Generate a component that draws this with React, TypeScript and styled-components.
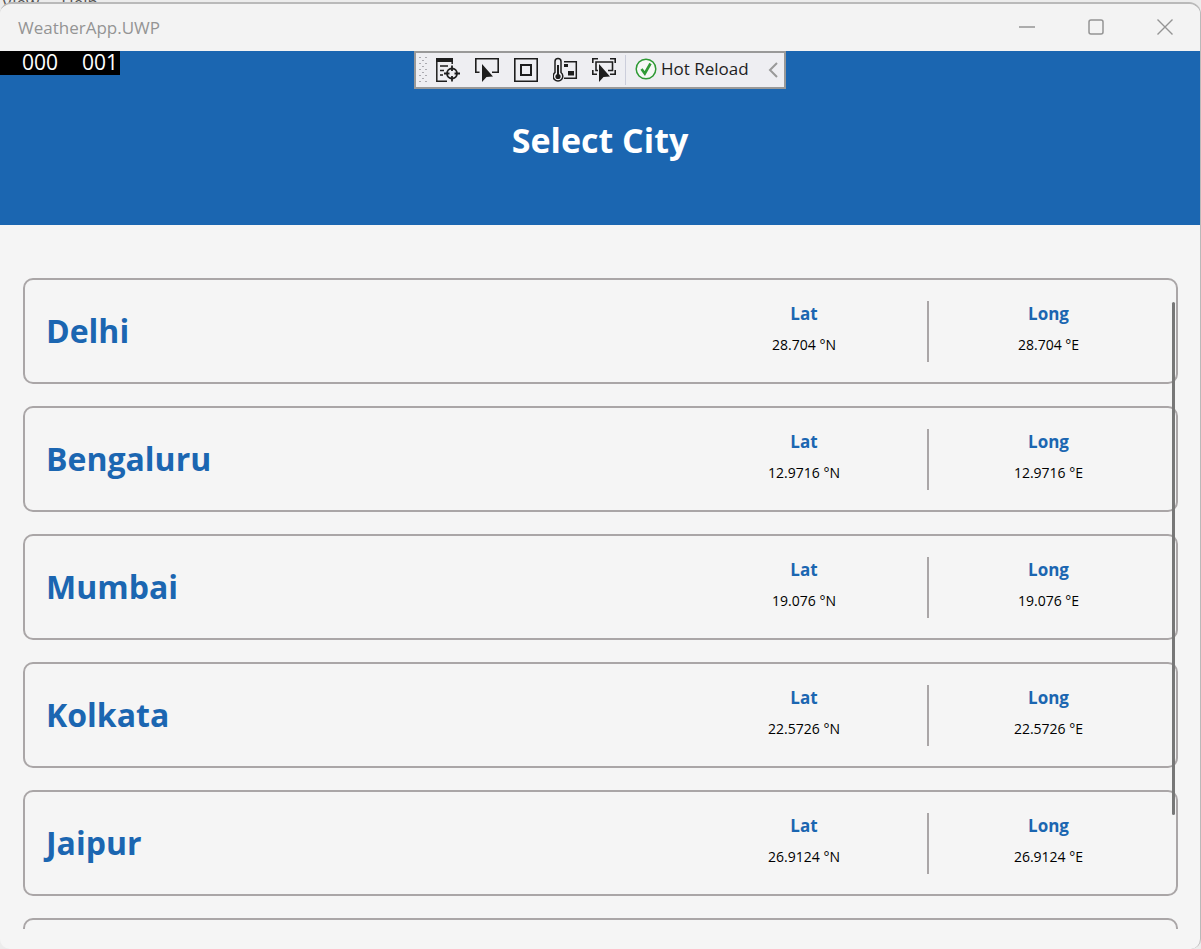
import React from "react";
import styled, { createGlobalStyle } from "styled-components";

const blue = "#1b66b1";
const outline = "#aaa6a7";

const GlobalStyle = createGlobalStyle`
  * { box-sizing: border-box; }
  body {
    margin: 0;
    background: #ececec;
    font-family: "Open Sans", "Noto Sans", sans-serif;
  }
  button {
    font: inherit;
    color: inherit;
    background: none;
    border: 0;
    padding: 0;
  }
`;

const Desktop = styled.div`
  position: relative;
  height: 100vh;
  padding-top: 2px;
  overflow: hidden;
`;

const BackgroundMenu = styled.div`
  position: absolute;
  top: -9px;
  left: 2px;
  display: flex;
  gap: 22px;
  color: #555;
  font-size: 17px;
  line-height: 24px;
`;

const Window = styled.div`
  position: relative;
  display: flex;
  flex-direction: column;
  height: 100%;
  overflow: hidden;
  background: #f5f5f5;
  border: solid #b9b9b9;
  border-width: 2px 1px 0 0;
  border-radius: 12px 12px 10px 10px;
`;

const TitleBar = styled.header`
  display: flex;
  flex: none;
  align-items: center;
  justify-content: space-between;
  height: 47px;
  padding: 0 1px 0 18px;
  background: #f3f3f3;
  color: #949494;
`;

const WindowTitle = styled.span`
  font-size: 17px;
  line-height: 24px;
`;

const WindowControls = styled.div`
  display: flex;
  align-self: flex-start;
`;

const WindowButton = styled.button`
  display: grid;
  place-items: center;
  width: 69px;
  height: 45px;
`;

const Banner = styled.div`
  position: relative;
  display: flex;
  flex: none;
  align-items: center;
  justify-content: center;
  height: 174px;
  padding-top: 4px;
  background: ${blue};
`;

const BannerTitle = styled.h1`
  margin: 0;
  color: #fff;
  font-size: 34px;
  font-weight: 700;
  line-height: 48px;
`;

const FrameCounter = styled.div`
  position: absolute;
  top: 0;
  left: 0;
  display: flex;
  gap: 24px;
  width: 120px;
  height: 24px;
  padding-left: 22px;
  background: #000;
  color: #fff;
  font-size: 21px;
  line-height: 23px;
`;

const DebugToolbar = styled.div`
  position: absolute;
  top: 0;
  left: 50%;
  display: flex;
  align-items: center;
  width: 372px;
  height: 38px;
  padding: 0 6px 0 3px;
  transform: translateX(-50%);
  background: #eeeef2;
  border: 2px solid #999;
  color: #1e1e1e;
`;

const ToolButtons = styled.div`
  display: flex;
  gap: 14px;
  margin-left: 8px;
`;

const ToolButton = styled.button`
  display: block;
  width: 25px;
  height: 26px;

  svg { display: block; }
`;

const ToolDivider = styled.span`
  width: 1px;
  height: 30px;
  margin: 0 9px 0 8px;
  background: #cccedb;
`;

const HotReload = styled.button`
  display: flex;
  align-items: center;
  gap: 4px;
  height: 36px;
  padding-bottom: 2px;
  font-size: 17px;
  line-height: 24px;
  white-space: nowrap;

  svg { flex: none; }
`;

const CollapseButton = styled.button`
  display: block;
  margin-left: auto;

  svg { display: block; }
`;

const ListArea = styled.main`
  position: relative;
  flex: 1;
  min-height: 0;
  margin: 53px 22px 20px 23px;
  overflow: hidden;
`;

const CityList = styled.ul`
  display: flex;
  flex-direction: column;
  gap: 22px;
  margin: 0;
  padding: 0;
  list-style: none;
`;

const CityCard = styled.li`
  display: grid;
  grid-template-columns: 1fr 246px 2px 239px;
  align-items: center;
  height: 106px;
  padding: 0 8px 0 21px;
  border: 2px solid ${outline};
  border-radius: 10px;
`;

const CityName = styled.h2`
  margin: 0;
  color: ${blue};
  font-size: 32px;
  font-weight: 700;
  line-height: 48px;
`;

const Coordinate = styled.div`
  display: flex;
  flex-direction: column;
  gap: 7px;
  align-items: center;
  padding-bottom: 4px;
`;

const CoordinateLabel = styled.span`
  color: ${blue};
  font-size: 17px;
  font-weight: 700;
  line-height: 24px;
`;

const CoordinateValue = styled.span`
  color: #000;
  font-size: 14px;
  line-height: 24px;
`;

const CardDivider = styled.span`
  height: 61px;
  background: ${outline};
`;

const ScrollTrack = styled.div`
  position: absolute;
  top: 24px;
  right: 3px;
  bottom: 24px;
  width: 3px;
`;

const ScrollThumb = styled.div`
  height: 85%;
  border-radius: 2px;
  background: #777;
`;

const pointer = "M7 7V25L11.5 20L18 19.5Z";

const InspectIcon = () => (
  <svg width="25" height="26" viewBox="0 0 25 26" fill="none" stroke="currentColor" strokeWidth="1.5">
    <path d="M.8 4V24.2H11M4 9H12M4 13.500H8M4 18H7M16.200 4V7" />
    <path d="M0 1H17V5H0Z" fill="currentColor" stroke="none" />
    <circle cx="16" cy="16.500" r="5" strokeWidth="1.800" />
    <path d="M16 8.500V14M16 19V24.500M8 16.500H13.500M18.500 16.500H24" strokeWidth="1.800" />
  </svg>
);

const SelectIcon = () => (
  <svg width="25" height="26" viewBox="0 0 25 26" fill="none" stroke="currentColor" strokeWidth="1.600">
    <path d="M4.500 15.200H.8V1.800H23.200V15.200H17" />
    <path d={pointer} fill="currentColor" stroke="none" />
  </svg>
);

const LayoutIcon = () => (
  <svg width="25" height="26" viewBox="0 0 25 26" fill="none" stroke="currentColor" strokeWidth="1.600">
    <path d="M.8 1.800H23.200V24.200H.8Z" />
    <path d="M7 8H17V18H7Z" strokeWidth="2" />
  </svg>
);

const ThermometerIcon = () => (
  <svg width="25" height="26" viewBox="0 0 25 26" fill="none" stroke="currentColor" strokeWidth="1.500">
    <path d="M2 15.500V4.500A3 3 0 0 1 8 4.500V15.500A4.800 4.800 0 1 1 2 15.500Z" />
    <path d="M5 8V18" strokeWidth="2" />
    <circle cx="5" cy="19.500" r="2.600" fill="currentColor" stroke="none" />
    <path d="M11 4.800H23.300V21.200H11" />
    <path d="M11 7H15V10H11ZM15 14H21V18.500H15Z" fill="currentColor" stroke="none" />
  </svg>
);

const TrackIcon = () => (
  <svg width="25" height="26" viewBox="0 0 25 26" fill="none" stroke="currentColor" strokeWidth="1.600">
    <path d="M.8 6V1.800H6M18 1.800H23.200V6M.8 13V17.200H5M18 17.200H23.200V13" />
    <path d="M6 13.500H4V5H20.500V13.500H16" />
    <path d={pointer} fill="currentColor" stroke="none" />
  </svg>
);

const tools = [
  { label: "Go to Live Visual Tree", Icon: InspectIcon },
  { label: "Select Element", Icon: SelectIcon },
  { label: "Display Layout Adorners", Icon: LayoutIcon },
  { label: "Scan for Accessibility Issues", Icon: ThermometerIcon },
  { label: "Track Focused Element", Icon: TrackIcon },
];

const cities = [
  { name: "Delhi", degrees: "28.704" },
  { name: "Bengaluru", degrees: "12.9716" },
  { name: "Mumbai", degrees: "19.076" },
  { name: "Kolkata", degrees: "22.5726" },
  { name: "Jaipur", degrees: "26.9124" },
  { name: "", degrees: "" },
];

export default function App() {
  return (
    <Desktop>
      <GlobalStyle />
      <BackgroundMenu aria-hidden="true">
        <span>View</span>
        <span>Help</span>
      </BackgroundMenu>
      <Window>
        <TitleBar>
          <WindowTitle>WeatherApp.UWP</WindowTitle>
          <WindowControls>
            <WindowButton aria-label="Minimize">
              <svg width="16" height="16" fill="none" stroke="currentColor">
                <path d="M0 8H16" strokeWidth="1.500" />
              </svg>
            </WindowButton>
            <WindowButton aria-label="Maximize">
              <svg width="16" height="16" fill="none" stroke="currentColor">
                <rect x="1" y="1" width="14" height="14" rx="2" strokeWidth="1.500" />
              </svg>
            </WindowButton>
            <WindowButton aria-label="Close">
              <svg width="16" height="16" fill="none" stroke="currentColor">
                <path d="M.5 .5L15.500 15.500M15.500 .5L.5 15.500" strokeWidth="1.400" />
              </svg>
            </WindowButton>
          </WindowControls>
        </TitleBar>
        <Banner>
          <FrameCounter>
            <span>000</span>
            <span>001</span>
          </FrameCounter>
          <DebugToolbar>
            <svg width="9" height="28" fill="#aaaab0" aria-hidden="true">
              {[0, 1, 2, 3, 4].map((row) => (
                <React.Fragment key={row}>
                  <rect x="0" y={1 + row * 6} width="2" height="1" />
                  <rect x="6" y={1 + row * 6} width="2" height="1" />
                  {row < 4 && <rect x="3" y={4 + row * 6} width="2" height="1" />}
                </React.Fragment>
              ))}
            </svg>
            <ToolButtons>
              {tools.map(({ label, Icon }) => (
                <ToolButton key={label} aria-label={label}>
                  <Icon />
                </ToolButton>
              ))}
            </ToolButtons>
            <ToolDivider />
            <HotReload>
              <svg width="22" height="22" viewBox="0 0 22 22" fill="none" stroke="#2f9a35">
                <circle cx="11" cy="11" r="9.800" strokeWidth="1.500" fill="#f6f8f6" />
                <path d="M6.500 11L9.800 15.500L15.500 5.500" strokeWidth="2.600" />
              </svg>
              Hot Reload
            </HotReload>
            <CollapseButton aria-label="Collapse toolbar">
              <svg width="10" height="16" fill="none" stroke="#999" strokeWidth="2">
                <path d="M9 1L2 8L9 15" />
              </svg>
            </CollapseButton>
          </DebugToolbar>
          <BannerTitle>Select City</BannerTitle>
        </Banner>
        <ListArea>
          <CityList>
            {cities.map(({ name, degrees }) => (
              <CityCard key={name}>
                {name && (
                  <>
                    <CityName>{name}</CityName>
                    <Coordinate>
                      <CoordinateLabel>Lat</CoordinateLabel>
                      <CoordinateValue>{degrees} °N</CoordinateValue>
                    </Coordinate>
                    <CardDivider />
                    <Coordinate>
                      <CoordinateLabel>Long</CoordinateLabel>
                      <CoordinateValue>{degrees} °E</CoordinateValue>
                    </Coordinate>
                  </>
                )}
              </CityCard>
            ))}
          </CityList>
          <ScrollTrack>
            <ScrollThumb />
          </ScrollTrack>
        </ListArea>
      </Window>
    </Desktop>
  );
}
